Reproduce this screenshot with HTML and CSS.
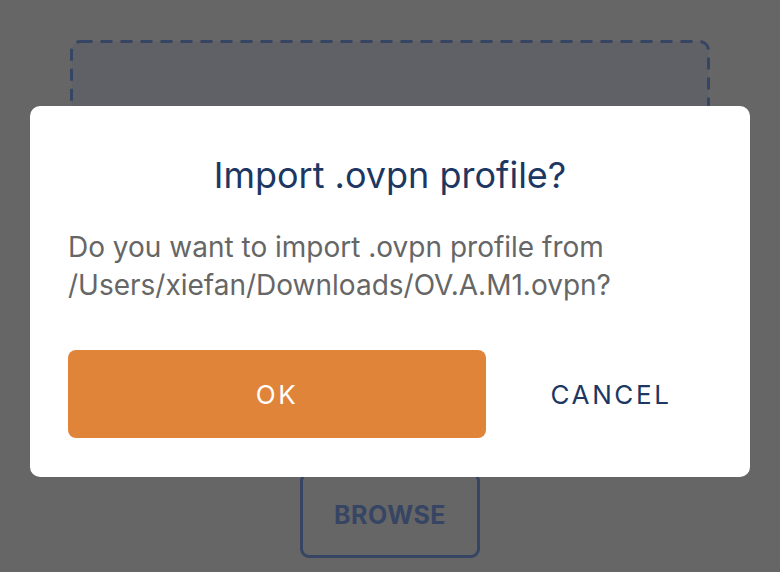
FILE: index.html
```html
<!DOCTYPE html>
<html lang="en">
<head>
<meta charset="UTF-8">
<title>Import profile</title>
<link rel="stylesheet" href="styles.css">
</head>
<body>

<div class="page">
    <div class="dropzone">
        <svg class="dropzone-border" width="640" height="406">
            <rect x="1.5" y="1.5" width="637" height="403" rx="9" fill="#5f6166" stroke="#364563" stroke-width="3" stroke-dasharray="12 8"></rect>
        </svg>
    </div>
    <button class="browse">BROWSE</button>
</div>

<div class="overlay">
    <div class="dialog">
        <h2 class="dialog-title">Import .ovpn profile?</h2>
        <p class="dialog-text">Do you want to import .ovpn profile from /Users/xiefan/Downloads/OV.A.M1.ovpn?</p>
        <div class="dialog-actions">
            <button class="btn btn-ok">OK</button>
            <button class="btn btn-cancel">CANCEL</button>
        </div>
    </div>
</div>

</body>
</html>
```

FILE: styles.css
```css
/* Dimmed page behind the modal */
body {
    margin: 0;
    font-family: 'Inter', 'Noto Sans', sans-serif;
    background: #666666;
    height: 572px;
    overflow: hidden;
}
.page {
    display: flex;
    flex-direction: column;
    align-items: center;
    padding-top: 40px;
}
.dropzone {
    width: 640px;
    height: 406px;
}
.dropzone-border {
    display: block;
}
.browse {
    margin-top: 26px;
    width: 180px;
    height: 86px;
    border: 3px solid #364563;
    border-radius: 9px;
    background: transparent;
    color: #364563;
    font-family: 'Inter', sans-serif;
    font-weight: 700;
    font-size: 25px;
    letter-spacing: 0.5px;
}

/* Modal */
.overlay {
    position: fixed;
    top: 0; left: 0; right: 0; bottom: 0;
    display: flex;
    justify-content: center;
    padding-top: 106px;
}
.dialog {
    width: 644px;
    height: 292px;
    padding: 40px 38px 39px 38px;
    background: #fff;
    border-radius: 10px;
}
.dialog-title {
    margin: 0;
    text-align: center;
    font-weight: 400;
    font-size: 36px;
    line-height: 58px;
    color: #1d3763;
}
.dialog-text {
    margin: 24px 0 0 0;
    font-size: 28px;
    line-height: 38px;
    color: #666666;
}
.dialog-actions {
    display: flex;
    gap: 24px;
    margin-top: 46px;
}
.btn {
    height: 88px;
    border: none;
    border-radius: 8px;
    font-family: 'Inter', sans-serif;
    font-size: 26px;
    letter-spacing: 2.6px;
    cursor: pointer;
}
.btn-ok {
    width: 418px;
    background: #e0843a;
    color: #fff;
}
.btn-cancel {
    width: 202px;
    background: transparent;
    color: #1d3763;
}
```
